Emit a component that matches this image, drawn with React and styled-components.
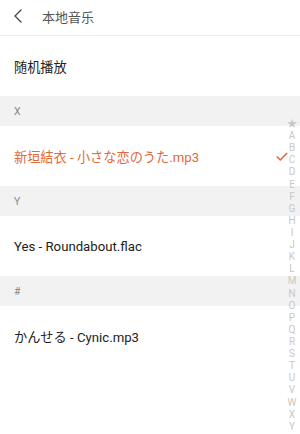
import React from 'react';
import styled, { createGlobalStyle } from 'styled-components';

const sections = [
  { letter: 'X', songs: [{ title: '新垣結衣 - 小さな恋のうた.mp3', active: true }] },
  { letter: 'Y', songs: [{ title: 'Yes - Roundabout.flac' }] },
  { letter: '#', songs: [{ title: 'かんせる - Cynic.mp3' }] },
];

const index = ['★', ...'ABCDEFGHIJKLMNOPQRSTUVWXY'.split('')];

export default function App() {
  return (
    <Page>
      <GlobalStyle />
      <Header>
        <Back viewBox="0 0 10 14">
          <path d="M8 1 L2 7 L8 13" fill="none" stroke="#444" strokeWidth="1.3" strokeLinecap="round" />
        </Back>
        <Title>本地音乐</Title>
      </Header>
      <Row>随机播放</Row>
      {sections.map((s) => (
        <React.Fragment key={s.letter}>
          <SectionHead>{s.letter}</SectionHead>
          {s.songs.map((song) => (
            <Row key={song.title} $active={song.active}>
              {song.title}
              {song.active && (
                <Check viewBox="0 0 14 10">
                  <path d="M1 5 L5 9 L13 1" fill="none" stroke="#e0663a" strokeWidth="1.8" />
                </Check>
              )}
            </Row>
          ))}
        </React.Fragment>
      ))}
      <Index>
        {index.map((l) => (
          <IndexItem key={l}>{l}</IndexItem>
        ))}
      </Index>
    </Page>
  );
}

const GlobalStyle = createGlobalStyle`
  body {
    margin: 0;
    background: #fff;
    font-family: Roboto, "Noto Sans CJK SC", "Noto Sans CJK JP", sans-serif;
  }
`;

const Page = styled.div`
  position: relative;
  width: 300px;
  height: 434px;
  overflow: hidden;
  background: #fff;
`;

const Header = styled.div`
  height: 36px;
  display: flex;
  align-items: center;
  border-bottom: 1px solid #ececec;
  box-sizing: border-box;
`;

const Back = styled.svg`
  width: 10px;
  height: 14px;
  margin-left: 13px;
  margin-right: 19px;
  margin-top: -3px;
`;

const Title = styled.div`
  font-size: 13px;
  color: #555;
  margin-top: -3px;
`;

const Row = styled.div`
  height: 60px;
  display: flex;
  align-items: center;
  justify-content: space-between;
  padding: 0 12px 0 14px;
  font-size: 13.2px;
  color: ${(p) => (p.$active ? '#e0693c' : '#222')};
  &:first-of-type {
    height: 61px;
  }
`;

const Check = styled.svg`
  width: 12px;
  height: 9px;
`;

const SectionHead = styled.div`
  height: 30px;
  display: flex;
  align-items: center;
  padding-left: 14px;
  background: #f2f2f2;
  font-size: 10.5px;
  color: #888;
`;

const Index = styled.div`
  position: absolute;
  right: 2px;
  top: 118px;
  width: 12px;
  display: flex;
  flex-direction: column;
  align-items: center;
`;

const IndexItem = styled.div`
  height: 12.12px;
  line-height: 12px;
  font-size: 10px;
  color: #c8c8c8;
`;
